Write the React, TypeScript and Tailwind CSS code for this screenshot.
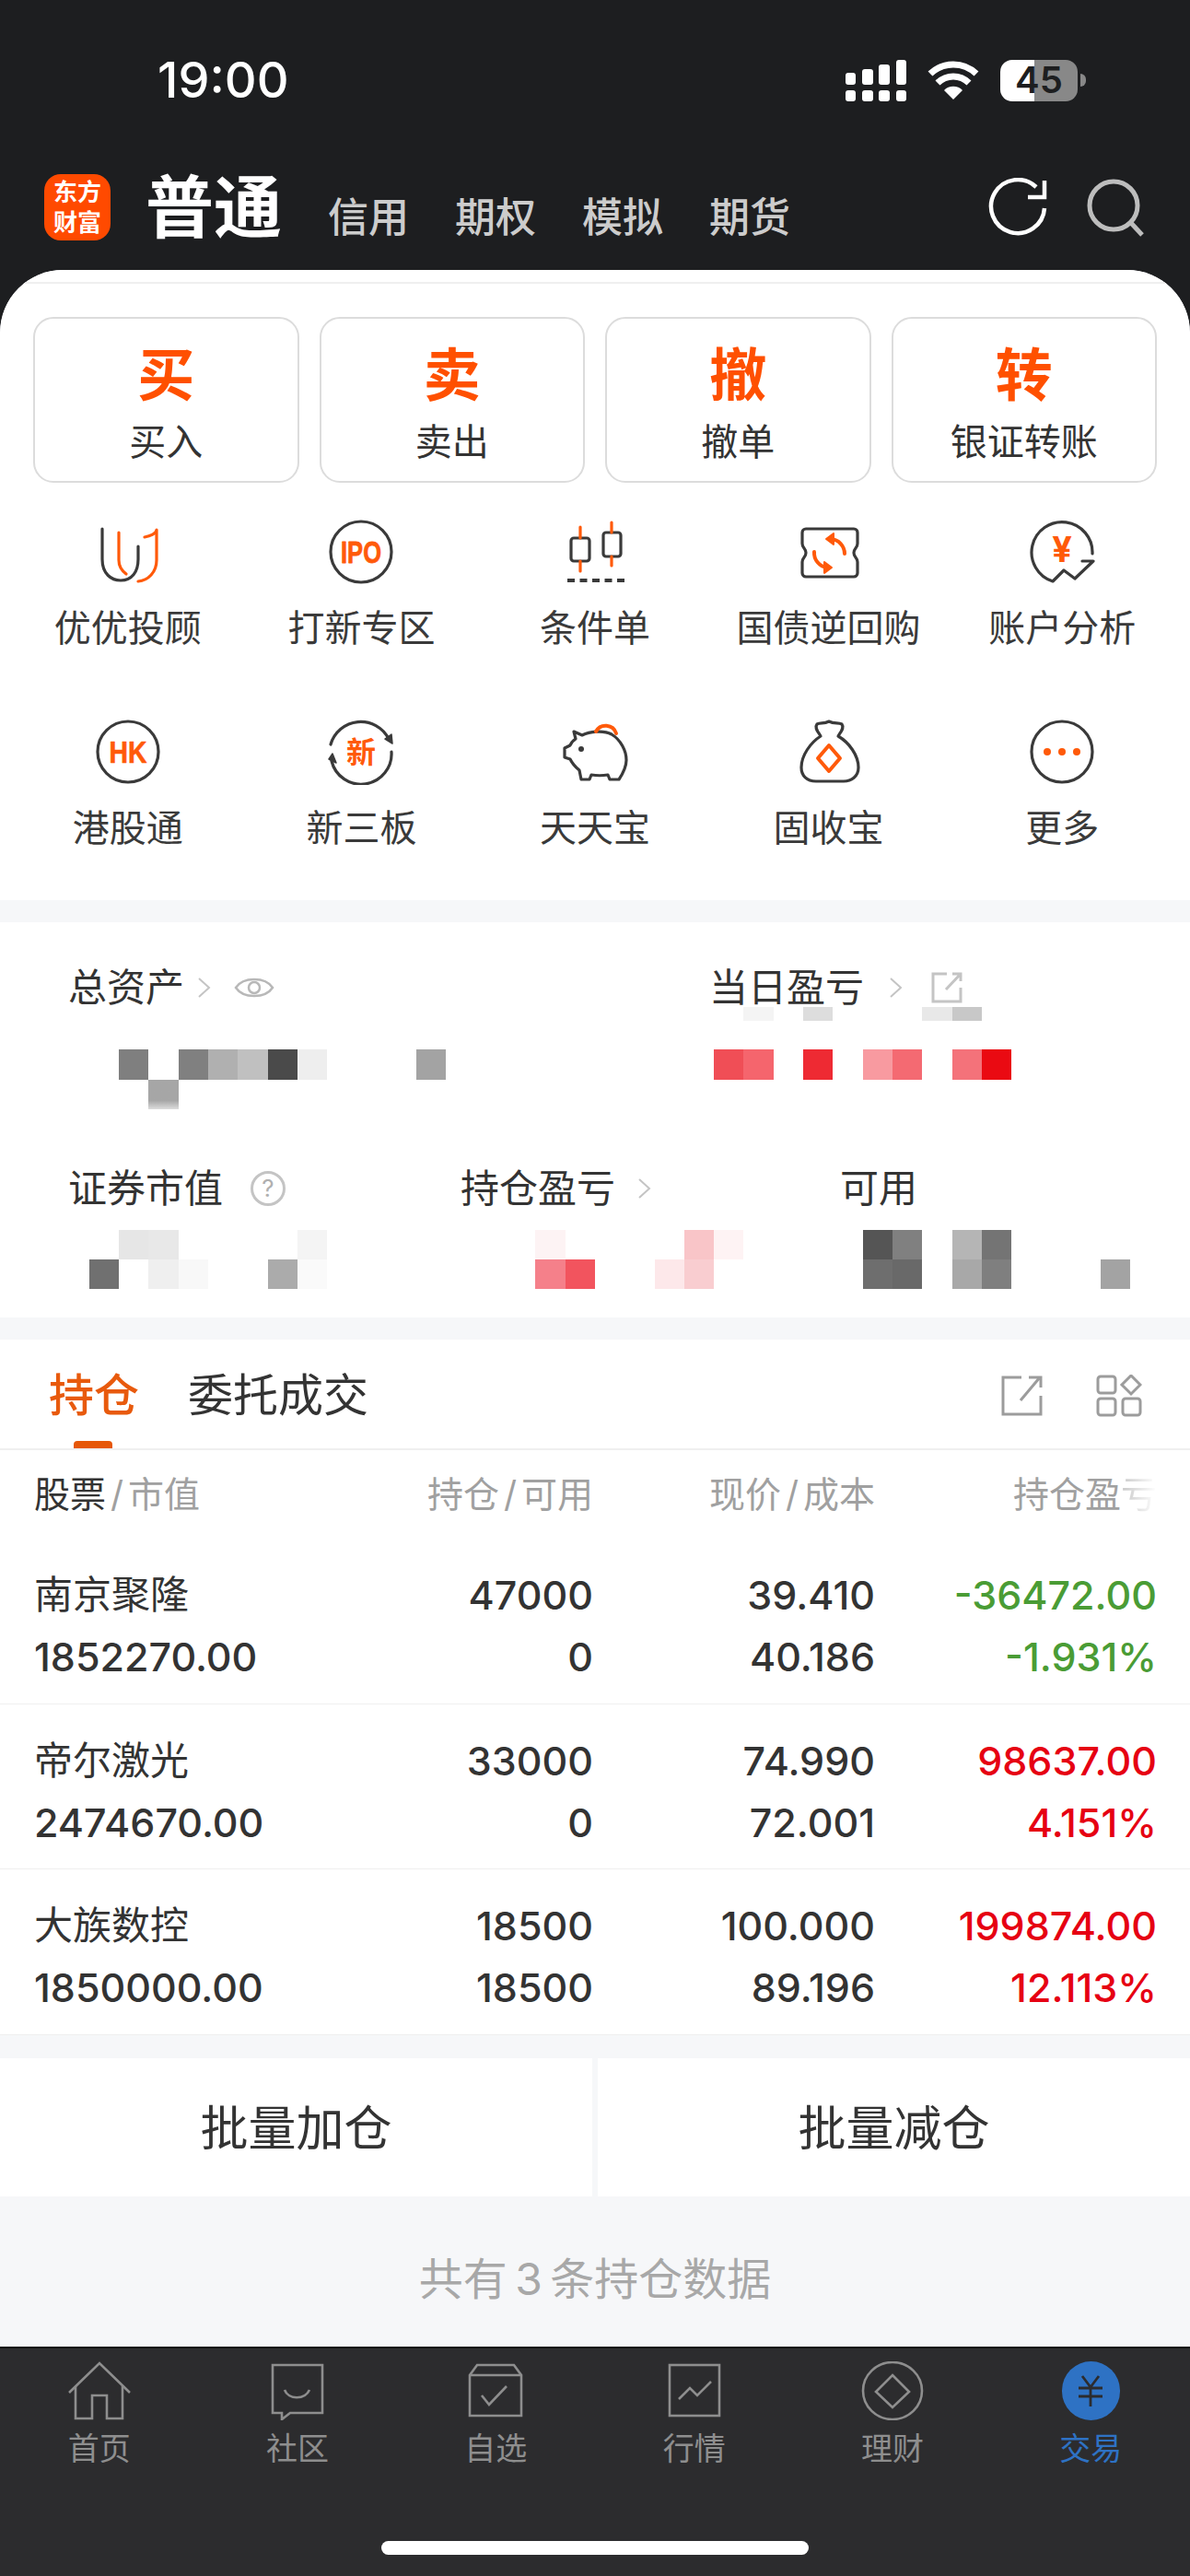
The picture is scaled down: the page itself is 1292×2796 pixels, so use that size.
import React from 'react'

const INK = '#3a3a3a'
const ORANGE = '#ff5a0a'

const actions = [
    { big: '买', label: '买入' },
    { big: '卖', label: '卖出' },
    { big: '撤', label: '撤单' },
    { big: '转', label: '银证转账' },
]

function IconBox({ children }: { children: React.ReactNode }) {
    return (
        <svg viewBox="0 0 72 72" className="w-[72px] h-[72px]" fill="none" strokeWidth={3.2} strokeLinecap="round" strokeLinejoin="round">
            {children}
        </svg>
    )
}

const shortcutIcons: Record<string, React.ReactNode> = {
    youyou: (
        <>
            <path d="M8 11V44C8 60 18 67 28 67C40 67 47 58 47 44V30" stroke={INK} />
            <path d="M26 15V45C26 52 30 57 34 60" stroke={ORANGE} />
            <path d="M54 20C60 19 67 16 67 12V45C67 58 58 67 47 68" stroke={ORANGE} />
        </>
    ),
    ipo: (
        <>
            <circle cx="36" cy="36" r="33" stroke={INK} />
            <text x="36" y="48" textAnchor="middle" fontSize="33" fontWeight="700" fontFamily="Liberation Sans" fill={ORANGE} stroke={ORANGE} strokeWidth={0.8} textLength="44" lengthAdjust="spacingAndGlyphs">IPO</text>
        </>
    ),
    candle: (
        <>
            <rect x="10" y="21" width="20" height="25" rx="3" stroke={INK} />
            <rect x="45" y="15" width="19" height="26" rx="3" stroke={INK} />
            <path d="M20 9V21M20 46V57M54 4V15M54 41V51" stroke={ORANGE} />
            <path d="M6 67H68" stroke={INK} strokeWidth={4} strokeLinecap="butt" strokeDasharray="8 5.5" />
        </>
    ),
    ticket: (
        <>
            <path d="M11 11H63A4 4 0 0 1 67 15V27C67 32 63 32 63 37S67 42 67 47V59A4 4 0 0 1 63 63H11A4 4 0 0 1 7 59V47C7 42 11 42 11 37S7 32 7 27V15A4 4 0 0 1 11 11Z" stroke={INK} />
            <path d="M53 38A16 16 0 0 0 38 22M20 36A16 16 0 0 0 34 53" stroke={ORANGE} strokeWidth={4} />
            <path d="M41 16L33 22L41 28ZM31 47L39 53L31 59Z" fill={ORANGE} stroke={ORANGE} strokeWidth={2} />
        </>
    ),
    analysis: (
        <>
            <path d="M69 38A33 33 0 1 0 26 68L38 56L50 65L70 46H58" stroke={INK} />
            <text x="36" y="47" textAnchor="middle" fontSize="38" fontWeight="700" fontFamily="Inter" fill={ORANGE}>¥</text>
        </>
    ),
    hk: (
        <>
            <circle cx="36" cy="36" r="33" stroke={INK} />
            <text x="36" y="48" textAnchor="middle" fontSize="33" fontWeight="700" fontFamily="Liberation Sans" fill={ORANGE} stroke={ORANGE} strokeWidth={0.6} textLength="41" lengthAdjust="spacingAndGlyphs">HK</text>
        </>
    ),
    xsb: (
        <>
            <path d="M3 28A34 34 0 0 1 66 22" stroke={INK} />
            <path d="M69 36A33 33 0 0 1 4 46" stroke={INK} />
            <path d="M62 22L70 27L69 17ZM1 44L9 48L5 38Z" fill={INK} stroke={INK} strokeWidth={1.5} />
            <text x="36" y="48" textAnchor="middle" fontSize="32" fontWeight="700" fontFamily="Noto Sans CJK SC" fill={ORANGE}>新</text>
        </>
    ),
    piggy: (
        <>
            <path d="M13 14L22 18C30 14 45 12 54 17C64 23 70 35 70 45C70 52 66 60 62 66H52L50 61C44 62 38 62 32 61L30 66H21L19 56C14 52 11 48 9 44L3 42V32L9 29C10 26 12 24 15 22Z" stroke={INK} />
            <circle cx="21" cy="33" r="3" fill={INK} />
            <path d="M37 14A12 12 0 0 1 59 16" stroke={ORANGE} strokeWidth={4} />
        </>
    ),
    bag: (
        <>
            <path d="M23 6C27 4 30 6 36 3C42 6 46 4 50 6C53 10 49 14 46 19C58 26 68 40 68 53C68 63 60 68 52 68H22C12 68 6 62 6 53C6 40 16 26 27 19C24 14 20 10 23 6Z" stroke={INK} />
            <path d="M36 29L48 43L36 57L24 43Z" stroke={ORANGE} strokeWidth={4} />
        </>
    ),
    more: (
        <>
            <circle cx="36" cy="36" r="33" stroke={INK} />
            <circle cx="20" cy="36" r="4" fill={ORANGE} />
            <circle cx="36" cy="36" r="4" fill={ORANGE} />
            <circle cx="52" cy="36" r="4" fill={ORANGE} />
        </>
    ),
}

const shortcuts = [
    { key: 'youyou', label: '优优投顾' },
    { key: 'ipo', label: '打新专区' },
    { key: 'candle', label: '条件单' },
    { key: 'ticket', label: '国债逆回购' },
    { key: 'analysis', label: '账户分析' },
    { key: 'hk', label: '港股通' },
    { key: 'xsb', label: '新三板' },
    { key: 'piggy', label: '天天宝' },
    { key: 'bag', label: '固收宝' },
    { key: 'more', label: '更多' },
]

const positions = [
    { name: '南京聚隆', value: '1852270.00', hold: '47000', free: '0', price: '39.410', cost: '40.186', pnl: '-36472.00', pct: '-1.931%', color: 'text-[#4a9c35]' },
    { name: '帝尔激光', value: '2474670.00', hold: '33000', free: '0', price: '74.990', cost: '72.001', pnl: '98637.00', pct: '4.151%', color: 'text-[#e60012]' },
    { name: '大族数控', value: '1850000.00', hold: '18500', free: '18500', price: '100.000', cost: '89.196', pnl: '199874.00', pct: '12.113%', color: 'text-[#e60012]' },
]

// masked amounts, one 1/40 wide column per block
type MosaicRow = Record<number, string>

const totalsTop: MosaicRow = {
    25: 'bg-[#f4f4f4]',
    27: 'bg-[#dddddd]',
    31: 'bg-[#e8e8e8]',
    32: 'bg-[#c8c8c8]',
}
const totalsMain: MosaicRow = {
    4: 'bg-[#7f7f7f]',
    6: 'bg-[#808080]',
    7: 'bg-[#b0b0b0]',
    8: 'bg-[#c0c0c0]',
    9: 'bg-[#4a4a4a]',
    10: 'bg-[#eeeeee]',
    14: 'bg-[#a3a3a3]',
    24: 'bg-[#f04e56]',
    25: 'bg-[#f5656d]',
    27: 'bg-[#ee2a33]',
    29: 'bg-[#f89aa0]',
    30: 'bg-[#f46a72]',
    32: 'bg-[#f4727a]',
    33: 'bg-[#ea0a12]',
}
const totalsLow: MosaicRow = {
    5: 'bg-gradient-to-b from-[#a6a6a6] from-70% to-[#dddddd]',
}
const detailTop: MosaicRow = {
    4: 'bg-[#e6e6e6]',
    5: 'bg-[#e8e8e8]',
    10: 'bg-[#f4f4f4]',
    18: 'bg-[#fdf3f4]',
    23: 'bg-[#f9c5c8]',
    24: 'bg-[#fef3f4]',
    29: 'bg-[#555555]',
    30: 'bg-[#808080]',
    32: 'bg-[#b5b5b5]',
    33: 'bg-[#747474]',
}
const detailLow: MosaicRow = {
    3: 'bg-[#707070]',
    5: 'bg-[#efefef]',
    6: 'bg-[#f8f8f8]',
    9: 'bg-[#ababab]',
    10: 'bg-[#fafafa]',
    18: 'bg-[#f5808a]',
    19: 'bg-[#f2545e]',
    22: 'bg-[#fde8ea]',
    23: 'bg-[#f9cdd0]',
    29: 'bg-[#6e6e6e]',
    30: 'bg-[#696969]',
    32: 'bg-[#a8a8a8]',
    33: 'bg-[#7f7f7f]',
    37: 'bg-[#a3a3a3]',
}

function Mosaic({ row, className }: { row: MosaicRow; className: string }) {
    return (
        <div className={`grid grid-cols-[repeat(40,1fr)] ${className}`}>
            {Array.from({ length: 40 }, (_, i) => (
                <div key={i} className={row[i] ?? ''} />
            ))}
        </div>
    )
}

function Chevron() {
    return (
        <svg viewBox="0 0 16 24" className="w-4 h-6" fill="none" stroke="#c4c4c4" strokeWidth={2}>
            <path d="M2 2L13 12L2 22" />
        </svg>
    )
}

function StatusBar() {
    return (
        <div className="flex items-center h-[50px] mt-[62px] pl-[171px] pr-[113px]">
            <span className="text-[54px] leading-[50px] font-medium text-white">19:00</span>
            <div className="ml-auto flex items-center gap-[22px]">
                <svg viewBox="0 0 66 45" className="w-[66px] h-[45px]" fill="#fff">
                    <rect x="0" y="14" width="11" height="13" rx="3" />
                    <rect x="18" y="10" width="12" height="17" rx="3" />
                    <rect x="36" y="5" width="12" height="22" rx="3" />
                    <rect x="55" y="0" width="11" height="27" rx="3" />
                    <rect x="0" y="33" width="11" height="12" rx="3" />
                    <rect x="18" y="33" width="12" height="12" rx="3" />
                    <rect x="36" y="33" width="12" height="12" rx="3" />
                    <rect x="55" y="33" width="11" height="12" rx="3" />
                </svg>
                <svg viewBox="0 0 58 42" className="w-[58px] h-[42px]" fill="none" stroke="#fff" strokeWidth={7}>
                    <path d="M4 14A36 36 0 0 1 54 14" />
                    <path d="M12 24A24 24 0 0 1 46 24" />
                    <path d="M29 42L19 32A14 14 0 0 1 39 32Z" fill="#fff" stroke="none" />
                </svg>
                <div className="flex items-center gap-[3px]">
                    <div className="w-[84px] h-[45px] rounded-[13px] bg-[linear-gradient(90deg,#fff_44%,#888_44%)] flex items-center justify-center text-[40px] leading-none font-semibold text-[#1d1e20]">
                        45
                    </div>
                    <div className="w-[6px] h-[14px] rounded-r-full bg-[#888]" />
                </div>
            </div>
        </div>
    )
}

function NavBar() {
    return (
        <div className="flex items-center h-[72px] mt-[77px] pl-[48px] pr-[47px]">
            <div className="w-[72px] h-[72px] rounded-[18px] bg-[#ff4a00] flex flex-col items-center justify-center text-[26px] leading-[33px] font-bold text-white">
                <span>东方</span>
                <span>财富</span>
            </div>
            <span className="ml-[38px] text-[74px] leading-[72px] font-bold text-white">普通</span>
            <div className="ml-[50px] mt-[22px] flex gap-[50px] text-[44px] leading-[44px] font-medium text-[#cccccc]">
                <span>信用</span>
                <span>期权</span>
                <span>模拟</span>
                <span>期货</span>
            </div>
            <div className="ml-auto flex items-center gap-[40px]">
                <svg viewBox="0 0 64 64" className="w-[64px] h-[64px]" fill="none" stroke="#fff" strokeWidth={4.5}>
                    <path d="M52 10A29 29 0 1 0 61 33" />
                    <path d="M61 3V21H43" />
                </svg>
                <svg viewBox="0 0 68 68" className="w-[68px] h-[68px]" fill="none" stroke="#bdbdbd" strokeWidth={5}>
                    <circle cx="32" cy="32" r="26" />
                    <path d="M51 51L63 64" />
                </svg>
            </div>
        </div>
    )
}

function ActionPanel() {
    return (
        <section className="bg-white rounded-t-[68px]">
            <div className="pt-[13px]">
                <div className="h-[2px] bg-[#efefef]" />
            </div>
            <div className="mt-[36px] px-[36px] grid grid-cols-4 gap-[22px]">
                {actions.map((a) => (
                    <div key={a.big} className="h-[180px] rounded-[22px] border-2 border-[#dcdcdc] flex flex-col items-center">
                        <span className="mt-[26px] h-[72px] text-[62px] leading-[72px] font-bold text-[#ff5000]">{a.big}</span>
                        <span className="mt-[14px] text-[40px] leading-[44px] text-[#333]">{a.label}</span>
                    </div>
                ))}
            </div>
            <div className="mt-[39px] px-[12px] pb-[52px] grid grid-cols-5 gap-y-[72px]">
                {shortcuts.map((s) => (
                    <div key={s.key} className="flex flex-col items-center">
                        <IconBox>{shortcutIcons[s.key]}</IconBox>
                        <span className="mt-[21px] text-[40px] leading-[52px] text-[#3a3a3a]">{s.label}</span>
                    </div>
                ))}
            </div>
        </section>
    )
}

function AssetPanel() {
    return (
        <section className="mt-[24px] bg-white pt-[49px] pb-[31px]">
            <div className="flex h-[43px] pl-[74px] text-[42px] leading-[43px] text-[#333]">
                <div className="w-[696px] flex items-center">
                    <span>总资产</span>
                    <span className="ml-[14px]"><Chevron /></span>
                    <svg viewBox="0 0 44 30" className="ml-[24px] w-[44px] h-[30px]" fill="none" stroke="#b8b8b8" strokeWidth={2.5}>
                        <path d="M2 15C10 3 34 3 42 15C34 27 10 27 2 15Z" />
                        <circle cx="22" cy="15" r="6" />
                    </svg>
                </div>
                <div className="flex items-center">
                    <span>当日盈亏</span>
                    <span className="ml-[27px]"><Chevron /></span>
                    <svg viewBox="0 0 36 36" className="ml-[29px] w-[36px] h-[36px]" fill="none" stroke="#c4c4c4" strokeWidth={3}>
                        <path d="M18 3H3V33H33V18" />
                        <path d="M17 20L33 3M24 3H33V11" />
                    </svg>
                </div>
            </div>
            <Mosaic row={totalsTop} className="h-[15px]" />
            <Mosaic row={totalsMain} className="mt-[31px] h-[33px]" />
            <Mosaic row={totalsLow} className="h-[32px]" />

            <div className="flex h-[43px] mt-[64px] pl-[74px] text-[42px] leading-[43px] text-[#333]">
                <div className="w-[426px] flex items-center">
                    <span>证券市值</span>
                    <span className="ml-[30px] w-[38px] h-[38px] rounded-full border-[3px] border-[#c4c4c4] flex items-center justify-center text-[26px] leading-none text-[#b0b0b0]">?</span>
                </div>
                <div className="w-[412px] flex items-center">
                    <span>持仓盈亏</span>
                    <span className="ml-[24px]"><Chevron /></span>
                </div>
                <span>可用</span>
            </div>
            <Mosaic row={detailTop} className="mt-[24px] h-[32px]" />
            <Mosaic row={detailLow} className="h-[32px]" />
        </section>
    )
}

function PositionRow({ p }: { p: (typeof positions)[number] }) {
    return (
        <div className="h-[179.5px] px-[37px] pt-[39px] border-b border-[#efefef] grid grid-cols-[305px_302px_306px_306px] grid-rows-[44px_44px] gap-y-[23px] text-[43px] leading-[44px] font-medium text-[#333]">
            <span className="text-[42px] font-normal">{p.name}</span>
            <span className="text-right">{p.hold}</span>
            <span className="text-right">{p.price}</span>
            <span className={`text-right ${p.color}`}>{p.pnl}</span>
            <span>{p.value}</span>
            <span className="text-right">{p.free}</span>
            <span className="text-right">{p.cost}</span>
            <span className={`text-right ${p.color}`}>{p.pct}</span>
        </div>
    )
}

function Slash() {
    return <span className="mx-[5px]">/</span>
}

function PositionPanel() {
    return (
        <section className="mt-[24px] bg-white">
            <div className="relative h-[120px] border-b-2 border-[#efefef] flex items-center pl-[53px] pr-[52px] pt-[4px]">
                <span className="text-[49px] leading-[56px] font-medium text-[#e85a0d]">持仓</span>
                <span className="ml-[53px] text-[49px] leading-[56px] text-[#333]">委托成交</span>
                <div className="absolute left-[80px] bottom-0 w-[42px] h-[8px] rounded-t-[4px] bg-[#e65708]" />
                <div className="ml-auto flex items-center gap-[58px]">
                    <svg viewBox="0 0 45 44" className="w-[45px] h-[44px]" fill="none" stroke="#9c9c9c" strokeWidth={3}>
                        <path d="M22 2H2V42H43V22" />
                        <path d="M21 27L42 2M30 2H43V13" />
                    </svg>
                    <svg viewBox="0 0 50 46" className="w-[50px] h-[46px]" fill="none" stroke="#9c9c9c" strokeWidth={3}>
                        <rect x="2" y="2" width="19" height="18" rx="3" />
                        <rect x="2" y="26" width="19" height="18" rx="3" />
                        <rect x="29" y="26" width="19" height="18" rx="3" />
                        <path d="M38 1L48 11L38 21L28 11Z" />
                    </svg>
                </div>
            </div>
            <div className="h-[96px] px-[37px] pt-[26px] grid grid-cols-[305px_302px_306px_306px] text-[39px] leading-[44px] text-[#a0a0a0]">
                <span><span className="text-[#333]">股票</span><Slash />市值</span>
                <span className="text-right">持仓<Slash />可用</span>
                <span className="text-right">现价<Slash />成本</span>
                <span className="text-right">
                    持仓盈
                    <span className="bg-gradient-to-r from-[#c8c8c8] to-white bg-clip-text text-transparent">亏</span>
                </span>
            </div>
            {positions.map((p) => (
                <PositionRow key={p.name} p={p} />
            ))}
        </section>
    )
}

function BatchBar() {
    return (
        <div className="mt-[25px] h-[150px] flex gap-[6px] text-[52px] text-[#333]">
            <div className="flex-1 bg-white pt-[4px] flex items-center justify-center">批量加仓</div>
            <div className="flex-1 bg-white pt-[4px] flex items-center justify-center">批量减仓</div>
        </div>
    )
}

function TabBar() {
    const gray = '#8e8e8e'
    const tabs = [
        {
            label: '首页',
            icon: (
                <>
                    <path d="M9 34L42 2L75 34" />
                    <path d="M16 27V62H34V37H50V62H67V27" />
                </>
            ),
        },
        {
            label: '社区',
            icon: (
                <>
                    <path d="M15 4H69V56H34L25 63V56H15Z" />
                    <path d="M28 31C32 42 50 42 55 31" />
                </>
            ),
        },
        {
            label: '自选',
            icon: (
                <>
                    <path d="M14 15L22 4H62L70 15V59H14Z" />
                    <path d="M14 15H70" />
                    <path d="M27 37L35 47L54 27" />
                </>
            ),
        },
        {
            label: '行情',
            icon: (
                <>
                    <rect x="15" y="4" width="54" height="55" />
                    <path d="M25 41L37 29L45 37L60 22" />
                </>
            ),
        },
        {
            label: '理财',
            icon: (
                <>
                    <ellipse cx="42" cy="32" rx="32" ry="31" />
                    <path d="M42 15L60 33L42 50L24 33Z" />
                </>
            ),
        },
    ]
    return (
        <div className="mt-auto h-[249px] bg-[#2c2c2e] border-t-2 border-[#111] shrink-0">
            <div className="grid grid-cols-6 pt-[14px]">
                {tabs.map((t) => (
                    <div key={t.label} className="flex flex-col items-center">
                        <svg viewBox="0 0 84 64" className="w-[84px] h-[64px]" fill="none" stroke={gray} strokeWidth={2.6}>
                            {t.icon}
                        </svg>
                        <span className="mt-[12px] text-[34px] leading-[38px] text-[#8e8e8e]">{t.label}</span>
                    </div>
                ))}
                <div className="flex flex-col items-center">
                    <div className="w-[63px] h-[64px] rounded-full bg-[#2e72c4] flex items-center justify-center">
                        <svg viewBox="0 0 30 36" className="w-[30px] h-[36px]" fill="none" stroke="#2c2c2e" strokeWidth={2.8}>
                            <path d="M6 2L15 14L24 2M2 15H28M2 24H28M15 14V35" />
                        </svg>
                    </div>
                    <span className="mt-[12px] text-[34px] leading-[38px] text-[#2e72c4]">交易</span>
                </div>
            </div>
            <div className="mt-[81px] mx-auto w-[464px] h-[15px] rounded-full bg-white" />
        </div>
    )
}

export default function App() {
    return (
        <div className="w-[1292px] h-[2796px] flex flex-col bg-[#1d1e20] font-['Inter','Noto_Sans_CJK_SC',sans-serif]">
            <StatusBar />
            <NavBar />
            <main className="mt-[32px] flex-1 flex flex-col rounded-t-[68px] bg-[#f6f7f9] overflow-hidden">
                <ActionPanel />
                <AssetPanel />
                <PositionPanel />
                <BatchBar />
                <div className="flex-1 pt-[18px] flex items-center justify-center text-[48px] text-[#a8a8a8] [word-spacing:-5px]">共有 3 条持仓数据</div>
                <TabBar />
            </main>
        </div>
    )
}
